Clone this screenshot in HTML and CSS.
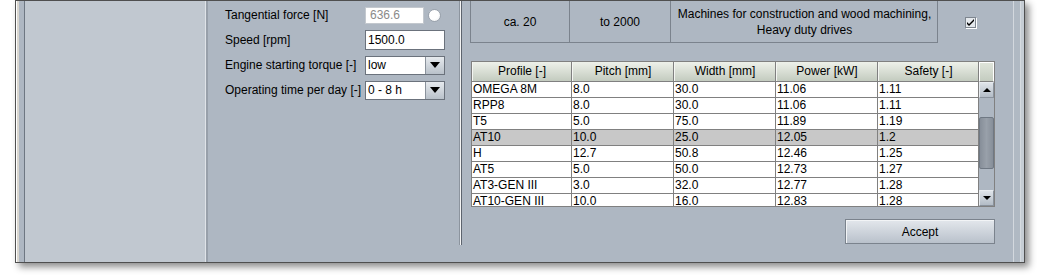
FILE: index.html
```html
<!DOCTYPE html>
<html lang="en">
<head>
    <meta charset="UTF-8">
    <title>Belt selection</title>
    <link rel="stylesheet" href="styles.css">
</head>
<body>
    <div class="window">
        <div class="frame-left"></div>
        <div class="side"></div>

        <div class="form-pane">
            <div class="form-row">
                <label class="form-label">Tangential force [N]</label>
                <div class="field-line">
                    <span class="field field-off">636.6</span>
                    <span class="radio"></span>
                </div>
            </div>
            <div class="form-row">
                <label class="form-label">Speed [rpm]</label>
                <span class="field field-wide">1500.0</span>
            </div>
            <div class="form-row">
                <label class="form-label">Engine starting torque [-]</label>
                <div class="combo">
                    <span class="combo-text">low</span>
                    <span class="combo-btn"><span class="arrow-down"></span></span>
                </div>
            </div>
            <div class="form-row">
                <label class="form-label">Operating time per day [-]</label>
                <div class="combo">
                    <span class="combo-text">0 - 8 h</span>
                    <span class="combo-btn"><span class="arrow-down"></span></span>
                </div>
            </div>
        </div>

        <div class="divider"></div>

        <div class="result-pane">
            <div class="usage-row">
                <div class="usage-box">
                    <div class="usage-cell">ca. 20</div>
                    <div class="usage-cell">to 2000</div>
                    <div class="usage-cell usage-text">Machines for construction and wood machining,<br>Heavy duty drives</div>
                </div>
                <span class="check">
                    <svg width="9" height="9" viewBox="0 0 9 9">
                        <path d="M1 4 L3 6 L8 1 L8 3 L3 8 L1 6 Z" fill="#000"/>
                    </svg>
                </span>
            </div>

            <div class="grid">
                <div class="cols">
                    <div class="grid-head">
                        <div class="hcell c1">Profile [-]</div>
                        <div class="hcell c2">Pitch [mm]</div>
                        <div class="hcell c3">Width [mm]</div>
                        <div class="hcell c4">Power [kW]</div>
                        <div class="hcell c5">Safety [-]</div>
                    </div>
                    <div class="grid-body">
                        <div class="grid-row"><div class="cell c1">OMEGA 8M</div><div class="cell c2">8.0</div><div class="cell c3">30.0</div><div class="cell c4">11.06</div><div class="cell c5">1.11</div></div>
                        <div class="grid-row"><div class="cell c1">RPP8</div><div class="cell c2">8.0</div><div class="cell c3">30.0</div><div class="cell c4">11.06</div><div class="cell c5">1.11</div></div>
                        <div class="grid-row"><div class="cell c1">T5</div><div class="cell c2">5.0</div><div class="cell c3">75.0</div><div class="cell c4">11.89</div><div class="cell c5">1.19</div></div>
                        <div class="grid-row selected"><div class="cell c1">AT10</div><div class="cell c2">10.0</div><div class="cell c3">25.0</div><div class="cell c4">12.05</div><div class="cell c5">1.2</div></div>
                        <div class="grid-row"><div class="cell c1">H</div><div class="cell c2">12.7</div><div class="cell c3">50.8</div><div class="cell c4">12.46</div><div class="cell c5">1.25</div></div>
                        <div class="grid-row"><div class="cell c1">AT5</div><div class="cell c2">5.0</div><div class="cell c3">50.0</div><div class="cell c4">12.73</div><div class="cell c5">1.27</div></div>
                        <div class="grid-row"><div class="cell c1">AT3-GEN III</div><div class="cell c2">3.0</div><div class="cell c3">32.0</div><div class="cell c4">12.77</div><div class="cell c5">1.28</div></div>
                        <div class="grid-row"><div class="cell c1">AT10-GEN III</div><div class="cell c2">10.0</div><div class="cell c3">16.0</div><div class="cell c4">12.83</div><div class="cell c5">1.28</div></div>
                    </div>
                </div>
                <div class="vscroll">
                    <div class="corner"></div>
                    <div class="track">
                        <div class="sbtn"><span class="arrow-up"></span></div>
                        <div class="thumb"></div>
                        <div class="sbtn sbtn-down"><span class="arrow-down small"></span></div>
                    </div>
                </div>
            </div>

            <div class="actions">
                <button type="button" class="accept">Accept</button>
            </div>
        </div>

        <div class="frame-right"></div>
    </div>
</body>
</html>
```

FILE: styles.css
```css
body {
    margin: 0;
    padding: 0;
    background-color: #fff;
    font-family: "Liberation Sans", Arial, sans-serif;
    font-size: 12px;
    color: #000;
    height: 278px;
    overflow: hidden;
}
.window {
    margin-left: 15px;
    width: 1010px;
    height: 263px;
    box-sizing: border-box;
    border: 1px solid #4f4f4f;
    display: flex;
    background-color: #aeb7c2;
    box-shadow: 4px 4px 7px rgba(0, 0, 0, 0.45);
}
.frame-left {
    width: 9px;
    box-sizing: border-box;
    border-left: 1px solid #fff;
    border-right: 1px solid #6e7782;
    background: linear-gradient(to right, #d9d6cf 2px, #aeb7c2 2px);
}
.side {
    width: 181px;
    box-sizing: border-box;
    background-color: #c1c8d0;
    border-right: 1px solid #dfe3e8;
}
.form-pane {
    width: 253px;
    box-sizing: border-box;
    border-left: 2px solid #98a0aa;
    padding: 4px 0 0 17px;
    display: flex;
    flex-direction: column;
    gap: 5px;
}
.form-row {
    display: grid;
    grid-template-columns: 140px auto;
    align-items: center;
    height: 20px;
}
.form-label {
    white-space: nowrap;
}
.field-line {
    display: flex;
    align-items: center;
    gap: 4px;
}
.field {
    display: block;
    box-sizing: border-box;
    background-color: #fff;
    height: 18px;
    line-height: 16px;
    padding-left: 2px;
}
.field-off {
    width: 59px;
    height: 17px;
    line-height: 15px;
    border: 1px solid #c3c8ce;
    color: #8a8a8a;
    padding-left: 4px;
}
.field-wide {
    width: 80px;
    height: 20px;
    line-height: 18px;
    border: 1px solid #6b727c;
}
.radio {
    width: 13px;
    height: 13px;
    box-sizing: border-box;
    border-radius: 50%;
    border: 1px solid #9aa2ac;
    background: radial-gradient(circle at 40% 40%, #fff 50%, #e4e8ec);
}
.combo {
    display: flex;
    width: 80px;
    height: 19px;
    box-sizing: border-box;
    border: 1px solid #6b727c;
    background-color: #fff;
}
.combo-text {
    flex: 1;
    line-height: 17px;
    padding-left: 2px;
}
.combo-btn {
    width: 19px;
    box-sizing: border-box;
    border-left: 1px solid #8a929c;
    background: linear-gradient(#e6eaee, #b9c1ca);
    display: flex;
    align-items: center;
    justify-content: center;
}
.arrow-down {
    width: 0;
    height: 0;
    border-left: 5px solid transparent;
    border-right: 5px solid transparent;
    border-top: 6px solid #000;
}
.arrow-down.small {
    border-left-width: 4px;
    border-right-width: 4px;
    border-top-width: 4px;
}
.arrow-up {
    width: 0;
    height: 0;
    border-left: 4px solid transparent;
    border-right: 4px solid transparent;
    border-bottom: 4px solid #000;
}
.divider {
    width: 3px;
    height: 244px;
    background: linear-gradient(to right, #8c949e 1px, #f4f4f4 1px 2px, #5d646e 2px);
}
.result-pane {
    width: 551px;
    box-sizing: border-box;
    padding-left: 8px;
}
.usage-row {
    display: flex;
    align-items: center;
}
.usage-box {
    display: grid;
    grid-template-columns: 99px 101px 267px;
    width: 468px;
    height: 42px;
    box-sizing: border-box;
    border: 1px solid #7b838d;
    border-top: none;
}
.usage-cell {
    display: flex;
    align-items: center;
    justify-content: center;
    text-align: center;
    border-right: 1px solid #7b838d;
    line-height: 16px;
}
.usage-cell:last-child {
    border-right: none;
}
.check {
    margin-left: 27px;
    margin-top: 0;
    width: 11px;
    height: 11px;
    box-sizing: border-box;
    border: 1px solid #7e868f;
    background-color: #e4e8ec;
    box-shadow: 1px 1px 0 #fff;
    display: flex;
    align-items: center;
    justify-content: center;
}
.grid {
    display: flex;
    margin: 18px 0 0 1px;
    width: 524px;
    height: 146px;
    box-sizing: border-box;
    border: 1px solid #808080;
}
.cols {
    width: 507px;
}
.c1 { width: 100px; }
.c2 { width: 102px; }
.c3 { width: 102px; }
.c4 { width: 102px; }
.c5 { width: 101px; }
.grid-head {
    display: flex;
    height: 20px;
    box-sizing: border-box;
    border-bottom: 1px solid #808080;
}
.hcell {
    box-sizing: border-box;
    border-right: 1px solid #808080;
    border-left: 1px solid #f4f6f2;
    background: linear-gradient(#eef1ea, #c3cbbf);
    text-align: center;
    line-height: 19px;
}
.grid-body {
    height: 124px;
    overflow: hidden;
    background-color: #fff;
}
.grid-row {
    display: flex;
    height: 16px;
    box-sizing: border-box;
    border-bottom: 1px solid #808080;
}
.grid-row.selected {
    background-color: #c8c8c8;
}
.cell {
    box-sizing: border-box;
    border-right: 1px solid #808080;
    padding-left: 1px;
    line-height: 15px;
    white-space: nowrap;
    overflow: hidden;
}
.vscroll {
    width: 15px;
    display: flex;
    flex-direction: column;
}
.corner {
    height: 20px;
    box-sizing: border-box;
    border: 1px solid #fff;
    border-bottom: 1px solid #808080;
    background: linear-gradient(#dfe4da, #c4ccc0);
}
.track {
    flex: 1;
    display: flex;
    flex-direction: column;
    background-color: #aeb7c2;
}
.sbtn {
    height: 16px;
    box-sizing: border-box;
    border: 1px solid #8a929c;
    border-top-color: #e8ecf0;
    border-left-color: #e8ecf0;
    background: linear-gradient(#dfe4e9, #b3bcc6);
    display: flex;
    align-items: center;
    justify-content: center;
}
.sbtn-down {
    margin-top: auto;
}
.thumb {
    margin-top: 19px;
    height: 52px;
    box-sizing: border-box;
    border: 1px solid #6f7883;
    border-radius: 2px;
    background-color: #a9b1bb;
    background-image:
        radial-gradient(circle, #6f7782 45%, transparent 55%),
        linear-gradient(to right, #99a1ab, #c3cad2 50%, #99a1ab);
    background-size: 2px 2px, 100% 100%;
    background-origin: content-box, border-box;
    padding: 3px 2px;
}
.actions {
    display: flex;
    justify-content: flex-end;
    width: 524px;
    margin: 12px 0 0 1px;
}
.accept {
    width: 150px;
    height: 25px;
    box-sizing: border-box;
    border: 1px solid #7b838d;
    box-shadow: inset 1px 1px 0 #f2f4f6;
    background: linear-gradient(#e3e7ec, #b9c1cb);
    font-family: "Liberation Sans", Arial, sans-serif;
    font-size: 12px;
    color: #000;
    padding: 0;
}
.frame-right {
    width: 11px;
    box-sizing: border-box;
    border-left: 1px solid #d3d8de;
    background: linear-gradient(to right, #b0b9c3 6px, #d6dbe0 6px 7px, #c6cdd4 7px);
}
```
